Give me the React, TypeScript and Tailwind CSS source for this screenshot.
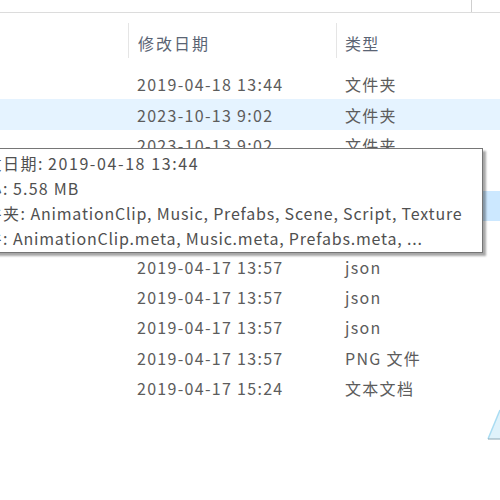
const rows: { date: string; type: string; bg?: string }[] = [
  { date: "2019-04-18 13:44", type: "文件夹" },
  { date: "2023-10-13 9:02", type: "文件夹", bg: "bg-[#e5f3ff]" },
  { date: "2023-10-13 9:02", type: "文件夹" },
  { date: "2019-04-18 13:44", type: "文件夹" },
  { date: "2019-04-18 13:44", type: "文件夹", bg: "bg-[#cce8ff]" },
  { date: "2019-04-17 13:57", type: "json" },
  { date: "2019-04-17 13:57", type: "json" },
  { date: "2019-04-17 13:57", type: "json" },
  { date: "2019-04-17 13:57", type: "json" },
  { date: "2019-04-17 13:57", type: "PNG 文件" },
  { date: "2019-04-17 15:24", type: "文本文档" },
];

const tip = [
  { label: "修改日期:", value: "2019-04-18 13:44", cls: "tracking-[1.6px]" },
  { label: "大小:", value: "5.58 MB", cls: "tracking-[1.2px]" },
  { label: "文件夹:", value: "AnimationClip, Music, Prefabs, Scene, Script, Texture", cls: "" },
  { label: "文件:", value: "AnimationClip.meta, Music.meta, Prefabs.meta, ...", cls: "" },
];

export default function App() {
  return (
    <div
      className="relative w-[500px] h-[500px] overflow-hidden bg-white text-[16px] tracking-[1.3px]"
      style={{ fontFamily: '"Noto Sans CJK SC", "Noto Sans", sans-serif' }}
    >
      {/* top strip */}
      <div className="h-[13px] border-b border-[#dcdcdc] flex">
        <div className="w-[472px] border-r border-[#cfcfcf]" />
      </div>

      {/* column header */}
      <div className="flex mt-[10px] h-[35px] text-[#5a6474]">
        <div className="w-[128px]" />
        <div className="w-[208px] border-l border-[#e5e5e5] pl-[9px] pt-[4px] flex items-center tracking-[2px]">
          修改日期
        </div>
        <div className="flex-1 border-l border-[#e5e5e5] pl-[8px] pt-[4px] flex items-center">
          类型
        </div>
      </div>

      {/* rows */}
      <div className="mt-[11px] text-[#5c5c5c]">
        {rows.map((r, i) => (
          <div key={i} className={`flex h-[30.4px] items-center ${r.bg ?? ""}`}>
            <div className="w-[128px]" />
            <div className="w-[208px] pl-[9px] whitespace-nowrap">{r.date}</div>
            <div className="flex-1 pl-[9px] whitespace-nowrap">{r.type}</div>
          </div>
        ))}
      </div>

      {/* tooltip */}
      <div className="absolute left-[-39px] top-[148px] w-[522px] h-[105px] bg-white border border-[#767676] shadow-[3px_3px_2px_rgba(0,0,0,0.35)] pl-[6px] pt-[2px] text-[#505050] leading-[25px] whitespace-nowrap tracking-[0.8px]">
        {tip.map((t) => (
          <div key={t.label} className="flex">
            <span className="tracking-[1.5px]">{t.label}</span>
            <span className={`ml-[4px] ${t.cls}`}>{t.value}</span>
          </div>
        ))}
      </div>

      {/* corner shape */}
      <svg className="absolute left-[486px] top-[408px]" width="14" height="32" viewBox="0 0 14 32">
        <polygon points="2,31 14,2 14,31" fill="#dff2fb" />
        <line x1="2" y1="31" x2="14" y2="2" stroke="#a9dcf2" strokeWidth="1.5" />
        <line x1="2" y1="31" x2="14" y2="31" stroke="#8aa6b3" strokeWidth="1" />
      </svg>
    </div>
  );
}
